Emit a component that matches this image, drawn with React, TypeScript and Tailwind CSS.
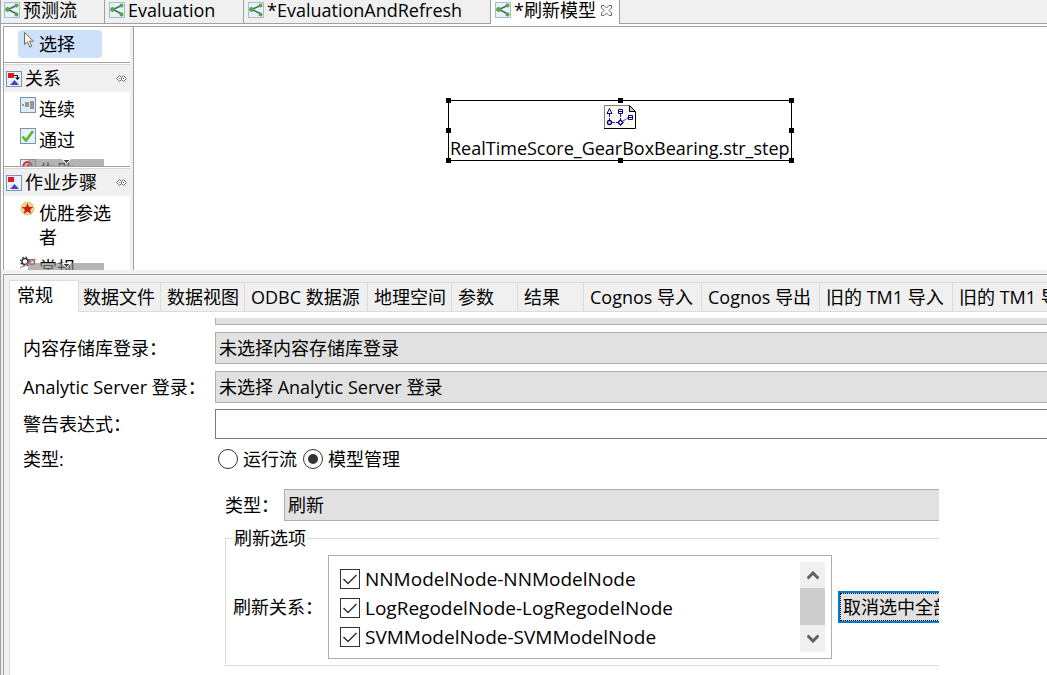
import { ReactNode } from "react";
import clsx from "clsx";

const editorTabs = [
  { label: "预测流", width: "w-[105px]" },
  { label: "Evaluation", width: "w-[139px]" },
  { label: "*EvaluationAndRefresh", width: "w-[247px]" },
  { label: "*刷新模型", width: "w-[129px]", active: true },
];

const propertyTabs = [
  { label: "常规", size: "w-[70px] pl-[7px]" },
  { label: "数据文件", size: "w-[82px] pl-1" },
  { label: "数据视图", size: "w-[84px] pl-[6px]" },
  { label: "ODBC 数据源", size: "w-[123px] pl-[6px]" },
  { label: "地理空间", size: "w-[84px] pl-[6px]" },
  { label: "参数", size: "w-[66px] pl-[6px]" },
  { label: "结果", size: "w-[66px] pl-[6px]" },
  { label: "Cognos 导入", size: "w-[118px] pl-[6px]" },
  { label: "Cognos 导出", size: "w-[118px] pl-[6px]" },
  { label: "旧的 TM1 导入", size: "w-[133px] pl-[6px]" },
  { label: "旧的 TM1 导出", size: "w-[133px] pl-[6px]" },
];

const relations = [
  "NNModelNode-NNModelNode",
  "LogRegodelNode-LogRegodelNode",
  "SVMModelNode-SVMModelNode",
];

const JobIcon = () => (
  <svg viewBox="0 0 16 16" className="size-4 shrink-0" aria-hidden="true">
    <rect x="0.5" y="0.5" width="15" height="15" fill="#e4f3fb" stroke="#a9bccb" />
    <path d="M12.5 3.5 4 7.5l9 4.5" fill="none" stroke="#4d5f5a" strokeWidth="1.4" />
    <circle cx="12.5" cy="3.5" r="2" fill="#58a641" />
    <circle cx="3.5" cy="7.5" r="2.4" fill="#58a641" />
    <circle cx="12.5" cy="12.5" r="2" fill="#58a641" />
  </svg>
);

const CloseIcon = () => (
  <svg viewBox="0 0 11 11" className="size-[11px]" aria-hidden="true">
    <path
      d="M.5.5h2.500l2.500 2.500L8 .5h2.500V3L8 5.500 10.500 8v2.500H8L5.500 8 3 10.500H.5V8L3 5.500.5 3z"
      fill="#fff"
      stroke="#666"
    />
  </svg>
);

const CursorIcon = () => (
  <svg viewBox="0 0 11 16" className="h-4 w-[11px]" aria-hidden="true">
    <path d="M.5.5v12l3-2.6 2.3 5.2 2-1-2.3-5h4z" fill="#fff8e0" stroke="#746d5e" />
  </svg>
);

const GroupIcon = ({ linked }: { linked?: boolean }) => (
  <svg viewBox="0 0 16 16" className="size-4 shrink-0" aria-hidden="true">
    <rect x="0.5" y="0.5" width="15" height="15" fill="#e6f4fc" stroke="#7d92b8" />
    <path d="M2 2h6v5H2z" fill="#e8141c" />
    <path d="M8.500 9 13 14H4z" fill="#5b3cbf" />
    {linked && (
      <>
        <path d="M8 4.500h3.500V7" fill="none" stroke="#000" />
        <path d="M9 6.500h5L11.500 9z" fill="#000" />
      </>
    )}
  </svg>
);

const SequenceIcon = () => (
  <svg viewBox="0 0 16 16" className="size-4" aria-hidden="true">
    <rect x="0.5" y="0.5" width="15" height="15" fill="#dceff9" stroke="#7d92b8" />
    <path d="M2 7h2v2H2zM5 5h4v5H5zM10 4h4v8h-4z" fill="#9b9494" />
  </svg>
);

const PassIcon = () => (
  <svg viewBox="0 0 16 16" className="size-4" aria-hidden="true">
    <rect x="0.5" y="0.5" width="15" height="15" fill="#e3f3fb" stroke="#7d92b8" />
    <path d="M2.500 8.500 6 12.500 13 3" fill="none" stroke="#5fb41f" strokeWidth="2.500" />
  </svg>
);

const FailIcon = () => (
  <svg viewBox="0 0 16 16" className="size-4" aria-hidden="true">
    <rect x="0.5" y="0.5" width="15" height="15" fill="#dceff9" stroke="#7d92b8" />
    <circle cx="7.500" cy="7" r="4" fill="#f4c4c4" stroke="#d22630" strokeWidth="2" />
    <path d="m10 4-5 6" stroke="#d22630" strokeWidth="2" />
  </svg>
);

const ChampionIcon = () => (
  <svg viewBox="0 0 16 16" className="size-4" aria-hidden="true">
    <circle cx="7.500" cy="7.500" r="6.500" fill="#ecd98c" stroke="#e2c672" />
    <path d="m7.500 2 1.600 3.900 4.200.2-3.200 2.700 1.100 4.100-3.700-2.300-3.700 2.300 1.100-4.100L1.700 6.100l4.200-.2z" fill="#d01818" />
  </svg>
);

const GeneralIcon = () => (
  <svg viewBox="0 0 16 16" className="size-4" aria-hidden="true">
    <circle cx="5" cy="5.500" r="3" fill="#fff" stroke="#333" strokeWidth="1.500" />
    <circle cx="5" cy="5.500" r="4.300" fill="none" stroke="#333" strokeWidth="1.500" strokeDasharray="1.400 2" />
    <circle cx="12" cy="6" r="2.500" fill="none" stroke="#8a6a6a" strokeWidth="1.500" />
    <path d="M0 12 16 3" stroke="#d66" />
  </svg>
);

const PinIcon = () => (
  <svg viewBox="0 0 11 7" className="h-[7px] w-[11px]" aria-hidden="true">
    <path d="M3.500.5.5 3.500l3 3 2-2 2 2 3-3-3-3-2 2z" fill="#fff" stroke="#666" />
    <path d="M3 3.500h5" stroke="#666" strokeDasharray="1 1" />
  </svg>
);

const StreamIcon = () => (
  <svg viewBox="0 0 32 24" className="h-6 w-8 shrink-0" aria-hidden="true">
    <path d="M.5.5h25l6 6v17H.5z" fill="#fffaf0" />
    <path d="M.5 23V.5H26" fill="none" stroke="#808080" />
    <path d="M26 0v6.500h6z" fill="#c8c8c8" />
    <path d="m25.500.5 6 6v17H0" fill="none" stroke="#000" />
    <path d="M25.500 1v5.500H31" fill="none" stroke="#000" />
    <path d="M5.500 9v6M16.500 9v6M8 17.500h6M19 16l5-3" fill="none" stroke="#1414e6" strokeDasharray="3 1" />
    <g fill="#fffaf0" stroke="#000080">
      <path d="M5.500 3.500 8 8.500H3z" />
      <path d="M14.500 4.500h4v4h-4zM14.500 6.500h4M24.500 10.500h4v4h-4zM24.500 12.500h4" />
      <circle cx="5.500" cy="17.500" r="2" strokeWidth="1.300" />
      <path d="m16.500 15 2.500 2.500-2.500 2.500-2.500-2.500z" strokeWidth="1.300" />
    </g>
  </svg>
);

const ScrollHint = () => (
  <div className="absolute bottom-0 left-6 right-[26px] flex h-[7px] justify-center bg-[#8c8c8c]/65">
    <svg viewBox="0 0 9 6" className="h-[6px] w-[9px]" aria-hidden="true">
      <path d="M.5.5h8l-4 4z" fill="#444" stroke="#fff" />
    </svg>
  </div>
);

const PaletteItem = ({ icon, children }: { icon: ReactNode; children: ReactNode }) => (
  <button className="flex w-full items-start gap-[3px] pb-[7px] pl-4 pr-3 text-left">
    <span className="w-4 shrink-0">{icon}</span>
    <span>{children}</span>
  </button>
);

const PaletteHeader = ({ icon, children }: { icon: ReactNode; children: ReactNode }) => (
  <div className="mt-px flex h-7 items-center gap-[3px] border-t border-[#d8d8d8] bg-[#f0f0f0] pl-0.5 pr-[3px]">
    {icon}
    <span className="grow pb-[2px]">{children}</span>
    <PinIcon />
  </div>
);

const handles = [
  "-left-[3px] -top-[3px]",
  "left-1/2 -ml-[2px] -top-[3px]",
  "-right-[3px] -top-[3px]",
  "-left-[3px] top-1/2 -mt-[3px]",
  "-right-[3px] top-1/2 -mt-[3px]",
  "-left-[3px] -bottom-[3px]",
  "left-1/2 -ml-[2px] -bottom-[3px]",
  "-right-[3px] -bottom-[3px]",
];

const Combo = ({ id, value }: { id: string; value: string }) => (
  <select
    id={id}
    className="block h-8 w-full appearance-none border border-r-0 border-[#adadad] bg-[#e1e1e1] pl-[3px] outline-none"
  >
    <option>{value}</option>
  </select>
);

const Radio = ({ label, checked }: { label: string; checked?: boolean }) => (
  <label className="flex items-center gap-[5px]">
    <span className="grid place-items-center">
      <input
        type="radio"
        name="jobType"
        defaultChecked={checked}
        className="peer col-start-1 row-start-1 size-5 appearance-none rounded-full border border-[#333] bg-white"
      />
      <span className="pointer-events-none col-start-1 row-start-1 hidden size-[10px] rounded-full bg-[#333] peer-checked:block" />
    </span>
    {label}
  </label>
);

const Check = ({ label }: { label: string }) => (
  <label className="flex h-[29px] items-center gap-[5px] text-[19px]">
    <span className="grid place-items-center">
      <input
        type="checkbox"
        defaultChecked
        className="peer col-start-1 row-start-1 size-5 appearance-none border border-[#333] bg-white"
      />
      <svg
        viewBox="0 0 20 20"
        className="pointer-events-none invisible col-start-1 row-start-1 size-5 peer-checked:visible"
        aria-hidden="true"
      >
        <path d="m3.500 10 4.500 4.500 8.500-8.500" fill="none" stroke="#333" strokeWidth="1.500" />
      </svg>
    </span>
    {label}
  </label>
);

const Chevron = ({ down }: { down?: boolean }) => (
  <svg viewBox="0 0 12 9" className={clsx("h-[9px] w-3", down && "rotate-180")} aria-hidden="true">
    <path d="m.5 7.500 5.500-5.500 5.500 5.500" fill="none" stroke="#606060" strokeWidth="3" />
  </svg>
);

const Palette = () => (
  <aside className="flex w-[130px] shrink-0 border-r border-[#a0a0a0] bg-[#f0f0f0] pr-[3px]">
    <div className="w-[126px] bg-white">
      <div className="h-9 border-b border-[#a0a0a0] pl-[14px] pt-[3px]">
        <button className="flex h-7 w-[84px] items-start gap-1 rounded-sm bg-[#cde1fa] pl-[6px] pt-[2px]">
          <CursorIcon />
          <span>选择</span>
        </button>
      </div>
      <PaletteHeader icon={<GroupIcon linked />}>关系</PaletteHeader>
      <div className="relative h-[75px] overflow-hidden border-b border-[#a0a0a0] pt-[5px]">
        <PaletteItem icon={<SequenceIcon />}>连续</PaletteItem>
        <PaletteItem icon={<PassIcon />}>通过</PaletteItem>
        <PaletteItem icon={<FailIcon />}>失败</PaletteItem>
        <ScrollHint />
      </div>
      <PaletteHeader icon={<GroupIcon />}>作业步骤</PaletteHeader>
      <div className="relative h-[74px] overflow-hidden pt-[5px]">
        <PaletteItem icon={<ChampionIcon />}>优胜参选者</PaletteItem>
        <PaletteItem icon={<GeneralIcon />}>常规</PaletteItem>
        <ScrollHint />
      </div>
    </div>
  </aside>
);

const Canvas = () => (
  <main className="relative grow bg-white">
    <div className="absolute left-[314px] top-[73px] flex h-[61px] flex-col items-center border border-black px-px pt-1">
      <StreamIcon />
      <span className="pt-[7px]">RealTimeScore_GearBoxBearing.str_step</span>
      {handles.map((pos) => (
        <span key={pos} className={clsx("absolute size-[5px] bg-black", pos)} />
      ))}
    </div>
  </main>
);

const RefreshOptions = () => (
  <fieldset className="flex h-[140px] border border-r-0 border-[#dcdcdc] pl-[7px]">
    <legend className="px-px">刷新选项</legend>
    <div className="flex h-full w-full items-center overflow-hidden pb-[2px]">
      <span className="w-[95px] shrink-0">刷新关系：</span>
      <div className="flex h-[104px] min-w-0 grow border border-[#acacb4] pb-[6px] pl-[11px] pr-[6px] pt-[6px]">
        <div className="grow pt-[3px]">
          {relations.map((name) => (
            <Check key={name} label={name} />
          ))}
        </div>
        <div className="flex w-[25px] flex-col bg-[#f0f0f0]">
          <button aria-label="向上滚动" className="flex h-[26px] items-center justify-center pt-[2px]">
            <Chevron />
          </button>
          <div className="h-[37px] bg-[#cdcdcd]" />
          <button aria-label="向下滚动" className="flex grow items-center justify-center">
            <Chevron down />
          </button>
        </div>
      </div>
      <div className="ml-[6px] w-[101px] shrink-0 overflow-hidden">
        <button className="block h-8 whitespace-nowrap border-2 border-[#0078d7] bg-[#e1e1e1]">
          <span className="block h-full border border-dotted border-black px-[2px] pt-px">取消选中全部</span>
        </button>
      </div>
    </div>
  </fieldset>
);

const Properties = () => (
  <section className="ml-[2px] grow border-l border-t border-[#a0a0a0] bg-[#f0f0f0] pl-[5px] pt-[5px]">
    <div role="tablist" className="flex h-8 overflow-hidden">
      {propertyTabs.map(({ label, size }, i) => (
        <button
          key={label}
          role="tab"
          aria-selected={i === 0}
          className={clsx(
            "shrink-0 whitespace-nowrap border-r border-t border-[#dcdcdc] text-left",
            i === 0 ? "border-l bg-white pb-1" : "mt-[2px] border-b",
            size,
          )}
        >
          {label}
        </button>
      ))}
    </div>
    <div className="min-h-[363px] border-l border-[#dcdcdc] bg-white pl-[13px] pt-[6px]">
      <div className="ml-48 h-[7px] border-b border-l border-[#adadad] bg-[#e1e1e1]" />
      <div className="mt-[7px] grid grid-cols-[192px_1fr] items-center">
        <label htmlFor="repository">内容存储库登录：</label>
        <Combo id="repository" value="未选择内容存储库登录" />
        <label htmlFor="server" className="mt-[7px]">Analytic Server 登录：</label>
        <div className="mt-[7px]">
          <Combo id="server" value="未选择 Analytic Server 登录" />
        </div>
        <label htmlFor="warning" className="mt-[6px]">警告表达式：</label>
        <input id="warning" className="mt-[6px] h-[30px] w-full border border-r-0 border-[#7a7a7a] bg-white px-1 outline-none" />
        <span className="mt-2">类型:</span>
        <div className="mt-2 flex gap-[6px] pl-[3px]">
          <Radio label="运行流" />
          <Radio label="模型管理" checked />
        </div>
      </div>
      <div className="ml-[202px] mr-[108px] mt-[18px]">
        <div className="flex items-center">
          <label htmlFor="action" className="w-[59px] shrink-0">类型：</label>
          <Combo id="action" value="刷新" />
        </div>
        <div className="mt-[5px]">
          <RefreshOptions />
        </div>
      </div>
    </div>
  </section>
);

const App = () => (
  <div className="flex min-h-screen flex-col overflow-hidden border-l border-[#a0a0a0] bg-[#f0f0f0] font-['Open_Sans','Noto_Sans_CJK_SC',sans-serif] text-[18px] leading-6 text-black">
    <div role="tablist" className="-ml-px flex h-6">
      {editorTabs.map((tab) => (
        <button
          key={tab.label}
          role="tab"
          aria-selected={!!tab.active}
          className={clsx(
            "flex shrink-0 items-center gap-[3px] border-r border-[#a0a0a0] pb-1 pl-1",
            tab.width,
            tab.active ? "bg-white" : "border-b",
          )}
        >
          <JobIcon />
          <span className="whitespace-nowrap">{tab.label}</span>
          {tab.active && (
            <span className="pl-[2px]">
              <CloseIcon />
            </span>
          )}
        </button>
      ))}
      <div className="grow border-b border-[#a0a0a0]" />
    </div>
    <div className="bg-white pl-[2px] pt-[2px]">
      <div className="flex h-[244px] border-l border-t border-[#a0a0a0]">
        <Palette />
        <Canvas />
      </div>
    </div>
    <div className="h-1" />
    <Properties />
  </div>
);

export default App;
